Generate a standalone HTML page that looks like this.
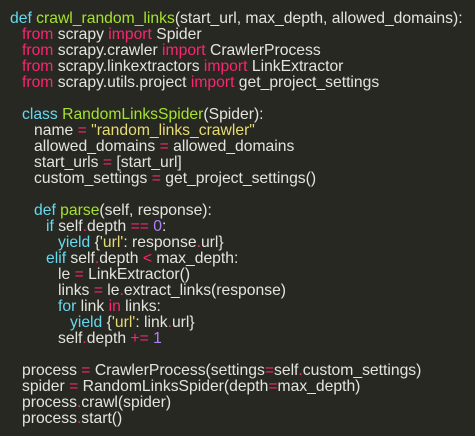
<!DOCTYPE html>
<html><head><style>
html,body{margin:0;padding:0;background:#272822;width:475px;height:436px;overflow:hidden}
pre{margin:0;position:absolute;left:10px;top:11px;font-family:"Liberation Sans",sans-serif;font-size:15.7px;line-height:16px;color:#e4e4de;white-space:pre}
.k{color:#f92672}.b{color:#66d9ef}.g{color:#a6e22e}.s{color:#e6db74}.n{color:#ae81ff}
div{height:16px}
</style></head><body><pre><div><span class="b">def</span> <span class="g">crawl_random_links</span>(start_url, max_depth, allowed_domains):</div><div style="padding-left:12px"><span class="k">from</span> scrapy <span class="k">import</span> Spider</div><div style="padding-left:12px"><span class="k">from</span> scrapy.crawler <span class="k">import</span> CrawlerProcess</div><div style="padding-left:12px"><span class="k">from</span> scrapy.linkextractors <span class="k">import</span> LinkExtractor</div><div style="padding-left:12px"><span class="k">from</span> scrapy.utils.project <span class="k">import</span> get_project_settings</div><div></div><div style="padding-left:12px"><span class="b">class</span> <span class="g">RandomLinksSpider</span>(Spider):</div><div style="padding-left:24px">name <span class="k">=</span> <span class="s">"random_links_crawler"</span></div><div style="padding-left:24px">allowed_domains <span class="k">=</span> allowed_domains</div><div style="padding-left:24px">start_urls <span class="k">=</span> [start_url]</div><div style="padding-left:24px">custom_settings <span class="k">=</span> get_project_settings()</div><div></div><div style="padding-left:24px"><span class="b">def</span> <span class="g">parse</span>(self, response):</div><div style="padding-left:36px"><span class="b">if</span> self<span class="k">.</span>depth <span class="k">==</span> <span class="n">0</span>:</div><div style="padding-left:48px"><span class="b">yield</span> {<span class="s">'url'</span>: response<span class="k">.</span>url}</div><div style="padding-left:36px"><span class="b">elif</span> self<span class="k">.</span>depth <span class="k">&lt;</span> max_depth:</div><div style="padding-left:48px">le <span class="k">=</span> LinkExtractor()</div><div style="padding-left:48px">links <span class="k">=</span> le<span class="k">.</span>extract_links(response)</div><div style="padding-left:48px"><span class="b">for</span> link <span class="k">in</span> links:</div><div style="padding-left:60px"><span class="b">yield</span> {<span class="s">'url'</span>: link<span class="k">.</span>url}</div><div style="padding-left:48px">self<span class="k">.</span>depth <span class="k">+=</span> <span class="n">1</span></div><div></div><div style="padding-left:12px">process <span class="k">=</span> CrawlerProcess(settings<span class="k">=</span>self<span class="k">.</span>custom_settings)</div><div style="padding-left:12px">spider <span class="k">=</span> RandomLinksSpider(depth<span class="k">=</span>max_depth)</div><div style="padding-left:12px">process<span class="k">.</span>crawl(spider)</div><div style="padding-left:12px">process<span class="k">.</span>start()</div></pre></body></html>
